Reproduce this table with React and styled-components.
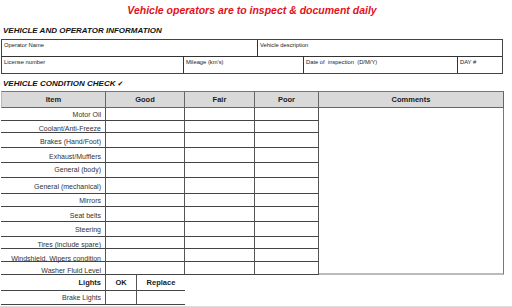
import React from 'react';
import styled, { createGlobalStyle } from 'styled-components';

const Global = createGlobalStyle`
  html, body {
    margin: 0;
    padding: 0;
    background: #fff;
  }
  body {
    font-family: "Liberation Sans", Arial, sans-serif;
    color: #222;
  }
`

const Page = styled.div`
  width: 512px;
  height: 307px;
  overflow: hidden;
  padding-left: 1px;
  box-sizing: border-box;
  border-bottom: 1px solid #ddd;
`

const Title = styled.h1`
  width: 502px;
  margin: 4px 0 0;
  text-align: center;
  font-size: 10.5px;
  line-height: 13px;
  font-weight: bold;
  font-style: italic;
  color: #e3121b;
`

const Section = styled.h2`
  margin: ${p => p.$top}px 0 0 2px;
  font-size: 8px;
  line-height: 10px;
  font-weight: bold;
  font-style: italic;
  color: #111;
`

const Check = styled.span`
  font-family: "DejaVu Sans", sans-serif;
  font-style: normal;
  font-size: 7px;
  margin-left: 2px;
`

const InfoTable = styled.div`
  margin-top: 3px;
  width: 502px;
  border: 1.5px solid #444;
  box-sizing: border-box;
`

const InfoRow = styled.div`
  display: grid;
  grid-template-columns: ${p => p.$cols};
  height: 16px;
  border-top: ${p => (p.$first ? 'none' : '1px solid #333')};
`

const InfoCell = styled.div`
  font-size: 5.8px;
  line-height: 7px;
  padding: 2px 0 0 2px;
  color: #222;
  border-left: ${p => (p.$first ? 'none' : '1px solid #333')};
`

const CheckTable = styled.div`
  margin-top: 2px;
  display: grid;
  width: 503px;
  grid-template-columns: 105px 79px 70px 64px 185px;
  grid-template-rows: ${p => p.$rows};
`

const Head = styled.div`
  background: #d9d9d9;
  border-top: 1px solid #777;
  border-bottom: 1px solid #666;
  border-right: 1px solid #666;
  border-left: ${p => (p.$first ? '1px solid #bbb' : 'none')};
  font-size: 7.5px;
  font-weight: bold;
  color: #1a1a1a;
  display: flex;
  align-items: center;
  justify-content: center;
  box-sizing: border-box;
`

const ItemCell = styled.div`
  border-bottom: 1px solid #444;
  border-right: 1px solid #555;
  display: flex;
  align-items: flex-end;
  justify-content: flex-end;
  padding-right: 4px;
  box-sizing: border-box;
  font-size: 7px;
  line-height: 8px;
  color: #333;
  white-space: nowrap;
`

const ItemText = styled.span`
  margin-bottom: ${p => p.$lift}px;
`

const Blank = styled.div`
  border-bottom: 1px solid #444;
  border-right: 1px solid #555;
  box-sizing: border-box;
`

const Comments = styled.div`
  grid-column: 5;
  grid-row: 2 / span ${p => p.$span};
  border-right: 1px solid #777;
  border-bottom: 2px solid #bbb;
  box-sizing: border-box;
`

const Lights = styled.div`
  display: grid;
  width: 184px;
  grid-template-columns: 105px 31px 48px;
  grid-template-rows: 16px 14px;
`

const LightCell = styled.div`
  border-bottom: 1px solid #444;
  border-right: ${p => (p.$last ? 'none' : '1px solid #555')};
  box-sizing: border-box;
  display: flex;
  align-items: center;
  justify-content: ${p => (p.$right ? 'flex-end' : 'center')};
  padding-right: ${p => (p.$right ? '4px' : '0')};
  font-size: ${p => (p.$bold ? '7.5px' : '7px')};
  font-weight: ${p => (p.$bold ? 'bold' : 'normal')};
  color: ${p => (p.$bold ? '#1a1a1a' : '#333')};
`

const items = [
  { name: 'Motor Oil', h: 13, lift: 1 },
  { name: 'Coolant/Anti-Freeze', h: 12, lift: -1 },
  { name: 'Brakes (Hand/Foot)', h: 15, lift: 1 },
  { name: 'Exhaust/Mufflers', h: 15, lift: 1 },
  { name: 'General (body)', h: 15, lift: 3 },
  { name: 'General (mechanical)', h: 16, lift: 2 },
  { name: 'Mirrors', h: 13, lift: 1 },
  { name: 'Seat belts', h: 15, lift: 1 },
  { name: 'Steering', h: 15, lift: 2 },
  { name: 'Tires (include spare)', h: 12, lift: -1 },
  { name: 'Windshield, Wipers condition', h: 13, lift: -2 },
  { name: 'Washer Fluid Level', h: 13, lift: -1 },
];

export default function App() {
  const rows = ['17px', ...items.map(i => `${i.h}px`)].join(' ');
  return (
    <Page>
      <Global />
      <Title>Vehicle operators are to inspect &amp; document daily</Title>
      <Section $top={9}>VEHICLE AND OPERATOR INFORMATION</Section>
      <InfoTable>
        <InfoRow $first $cols="255px 1fr">
          <InfoCell $first>Operator Name</InfoCell>
          <InfoCell>Vehicle description</InfoCell>
        </InfoRow>
        <InfoRow $cols="181px 120px 154px 1fr">
          <InfoCell $first>License number</InfoCell>
          <InfoCell>Mileage (km's)</InfoCell>
          <InfoCell>Date of&nbsp; inspection&nbsp; (D/M/Y)</InfoCell>
          <InfoCell>DAY #</InfoCell>
        </InfoRow>
      </InfoTable>
      <Section $top={5}>VEHICLE CONDITION CHECK<Check>✔</Check></Section>
      <CheckTable $rows={rows}>
        <Head $first>Item</Head>
        <Head>Good</Head>
        <Head>Fair</Head>
        <Head>Poor</Head>
        <Head>Comments</Head>
        {items.map((it, i) => (
          <React.Fragment key={it.name}>
            <ItemCell style={{ gridRow: i + 2 }}>
              <ItemText $lift={it.lift}>{it.name}</ItemText>
            </ItemCell>
            <Blank style={{ gridRow: i + 2 }} />
            <Blank style={{ gridRow: i + 2 }} />
            <Blank style={{ gridRow: i + 2 }} />
          </React.Fragment>
        ))}
        <Comments $span={items.length} />
      </CheckTable>
      <Lights>
        <LightCell $right $bold>Lights</LightCell>
        <LightCell $bold>OK</LightCell>
        <LightCell $bold $last>Replace</LightCell>
        <LightCell $right>Brake Lights</LightCell>
        <LightCell />
        <LightCell $last />
      </Lights>
    </Page>
  );
}
